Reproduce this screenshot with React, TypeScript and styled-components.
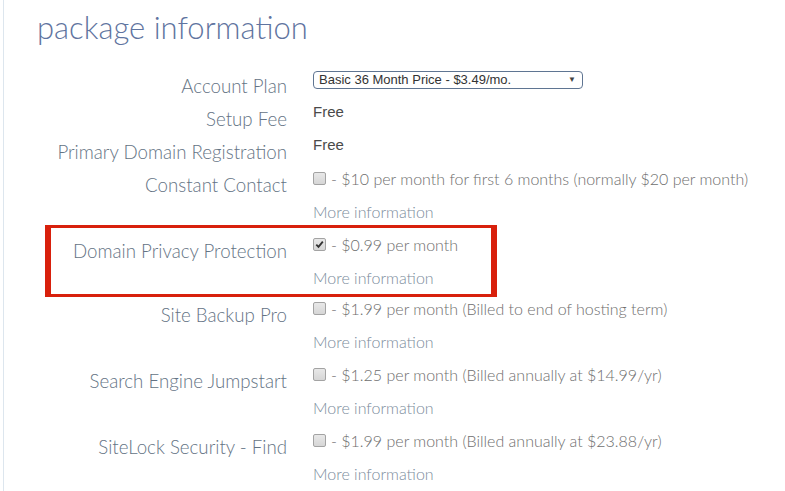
import React from 'react'
import styled, { createGlobalStyle } from 'styled-components'

type Addon = {
  label: string
  text: string
  checked?: boolean
  highlight?: boolean
}

const addons: Addon[] = [
  { label: 'Constant Contact', text: '- $10 per month for first 6 months (normally $20 per month)' },
  { label: 'Domain Privacy Protection', text: '- $0.99 per month', checked: true, highlight: true },
  { label: 'Site Backup Pro', text: '- $1.99 per month (Billed to end of hosting term)' },
  { label: 'Search Engine Jumpstart', text: '- $1.25 per month (Billed annually at $14.99/yr)' },
  { label: 'SiteLock Security - Find', text: '- $1.99 per month (Billed annually at $23.88/yr)' },
]

function CheckMark() {
  return (
    <svg width="9" height="9" viewBox="0 0 9 9">
      <path d="M1.3 4.6 L3.5 6.9 L7.8 1.6" fill="none" stroke="#333" strokeWidth="1.8" />
    </svg>
  )
}

function App() {
  return (
    <>
      <GlobalStyle />
      <Page>
        <Heading>package information</Heading>
        <Form>
          <Row>
            <Label>Account Plan</Label>
            <Value>
              <Line>
                <Select>
                  <span>Basic 36 Month Price - $3.49/mo.</span>
                  <Arrow>▼</Arrow>
                </Select>
              </Line>
            </Value>
          </Row>
          <Row>
            <Label>Setup Fee</Label>
            <Value>
              <Line>
                <Plain>Free</Plain>
              </Line>
            </Value>
          </Row>
          <Row>
            <Label>Primary Domain Registration</Label>
            <Value>
              <Line>
                <Plain>Free</Plain>
              </Line>
            </Value>
          </Row>
          {addons.map((a) => (
            <Row key={a.label} $highlight={a.highlight}>
              <Label>{a.label}</Label>
              <Value>
                <Line>
                  <Box $checked={a.checked}>{a.checked && <CheckMark />}</Box>
                  <Price>{a.text}</Price>
                </Line>
                <Line>
                  <More>More information</More>
                </Line>
              </Value>
            </Row>
          ))}
        </Form>
      </Page>
    </>
  )
}

export default App

// styles

const GlobalStyle = createGlobalStyle`
  html, body {
    margin: 0;
    padding: 0;
    background: #fff;
  }
  body {
    font-family: Lato, "Open Sans", sans-serif;
    overflow: hidden;
  }
`

const Page = styled.div`
  margin-left: 3px;
  border-left: 1px solid #dde6ee;
  min-height: 100vh;
  padding-top: 8px;
  box-sizing: border-box;
`

const Heading = styled.h1`
  margin: 0 0 17px 33px;
  font-family: Lato, sans-serif;
  font-weight: 300;
  font-size: 31px;
  line-height: 38px;
  color: #5f74a0;
`

const Form = styled.div`
  display: flex;
  flex-direction: column;
  align-items: flex-start;
  margin-left: 41px;
`

const Row = styled.div<{ $highlight?: boolean }>`
  display: grid;
  grid-template-columns: 236px auto;
  column-gap: 26px;
  border-left: 6px solid transparent;
  border-right: 6px solid transparent;
  box-sizing: border-box;

  ${(p) =>
    p.$highlight &&
    `
    width: 452px;
    border: 3px solid #d8200c;
    border-left-width: 6px;
    border-right-width: 6px;
    margin: -3px 0 -5px;
  `}
`

const Label = styled.div`
  align-self: start;
  text-align: right;
  padding-top: 7px;
  margin-bottom: -7px;
  font-weight: 300;
  font-size: 18.7px;
  line-height: 33px;
  color: #647384;
  white-space: nowrap;
`

const Value = styled.div`
  display: flex;
  flex-direction: column;
`

const Line = styled.div`
  display: flex;
  align-items: center;
  height: 33px;
  white-space: nowrap;
`

const Select = styled.div`
  display: flex;
  align-items: center;
  justify-content: space-between;
  width: 270px;
  height: 18px;
  box-sizing: border-box;
  padding: 0 6px 0 5px;
  border: 1px solid #5f7592;
  border-radius: 4px;
  font-family: "Liberation Sans", Arial, sans-serif;
  font-size: 13px;
  color: #333;
`

const Arrow = styled.span`
  font-size: 8px;
  color: #444;
`

const Plain = styled.span`
  font-family: "Liberation Sans", Arial, sans-serif;
  font-size: 15px;
  color: #4a4a4a;
  margin-top: -3px;
`

const Box = styled.span<{ $checked?: boolean }>`
  display: inline-flex;
  align-items: center;
  justify-content: center;
  width: 13px;
  height: 13px;
  box-sizing: border-box;
  border: 1px solid #a3a3a3;
  border-radius: 2px;
  background: linear-gradient(#e8e8e8, #d6d6d6);
  margin-right: 5px;
  margin-top: -1px;
`

const Price = styled.span`
  font-weight: 300;
  font-size: 16px;
  color: #6e6e6e;
`

const More = styled.span`
  font-weight: 300;
  font-size: 16px;
  color: #7b8c9c;
`
